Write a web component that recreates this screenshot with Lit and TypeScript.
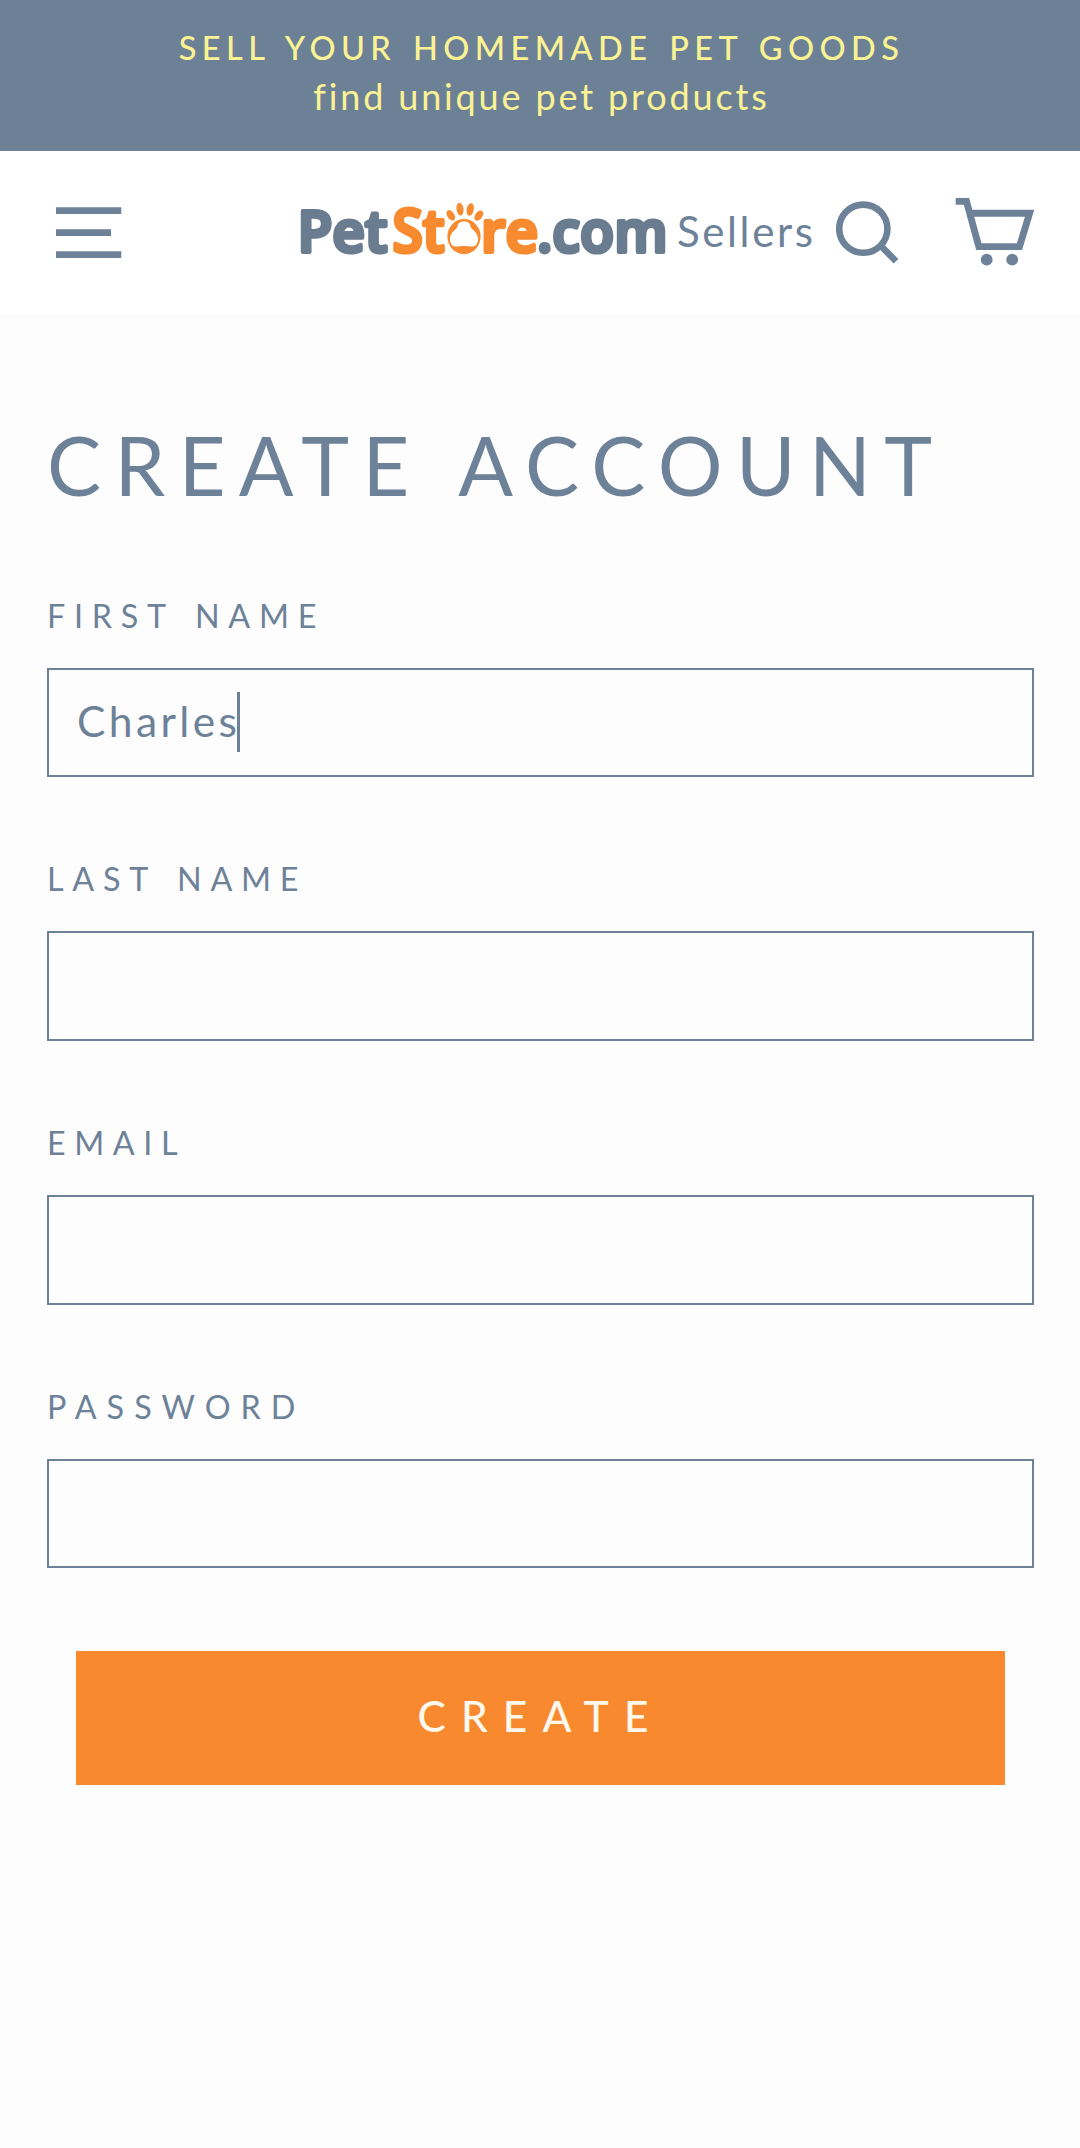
import { LitElement, html, css, svg } from "lit";
import { customElement, state } from "lit/decorators.js";

interface Field {
  label: string;
  value: string;
  focused: boolean;
  tracking: number;
}

const toes = [
  { x: 150.8, y: 17.3, tilt: -32, ry: 5.8 },
  { x: 160, y: 11.2, tilt: -8, ry: 6.4 },
  { x: 170.2, y: 11.5, tilt: 12, ry: 6.4 },
  { x: 178.8, y: 17.6, tilt: 36, ry: 5.8 },
];

@customElement("store-logo")
export class StoreLogo extends LitElement {
  static styles = css`
    :host { display: block; width: 366px; height: 69px; }
    svg { display: block; overflow: visible; }
    text {
      font: 600 58px "Open Sans", "Noto Sans", sans-serif;
      stroke-width: 4.2;
      stroke-linejoin: round;
      paint-order: stroke;
    }
    .big { font-size: 60px; }
    .slate { fill: #6a7c90; stroke: #6a7c90; }
    .orange { fill: #f88a2f; stroke: #f88a2f; }
    .paw { fill: #f88a2f; }
    .pad { fill: #fff; }
  `;
  render() {
    return html`<svg width="366" height="69" viewBox="0 0 366 69" role="img" aria-label="PetStore.com">
      <text class="slate" x="-2.500" y="53.800" textLength="90" lengthAdjust="spacingAndGlyphs">Pet</text>
      <text class="orange big" x="92.5" y="53.800" textLength="52" lengthAdjust="spacingAndGlyphs">St</text>
      <ellipse class="paw" cx="164" cy="38.6" rx="16.6" ry="17.6" />
      <path class="pad" d="M164 23.500c4.600 0 6 2.200 6.600 5.200.7 3 7.400 5 7.400 12.300 0 5-2.700 7.600-6 7.600-2.400 0-4.600-.7-8-.7s-5.600.7-8 .7c-3.300 0-6-2.600-6-7.600 0-7.300 6.700-9.300 7.400-12.300.6-3 2-5.200 6.600-5.200z" />
      ${toes.map((t) => svg`<ellipse class="paw" cx=${t.x} cy=${t.y} rx="3.5" ry=${t.ry} transform="rotate(${t.tilt} ${t.x} ${t.y})" />`)}
      <text class="orange" x="181" y="53.800" textLength="57" lengthAdjust="spacingAndGlyphs">re</text>
      <text class="slate" x="237" y="53.800" textLength="130.500" lengthAdjust="spacingAndGlyphs">.com</text>
    </svg>`;
  }
}

@customElement("app-root")
export class AppRoot extends LitElement {
  static styles = css`
    :host {
      display: block;
      min-height: 2148px;
      background: #fdfdfd;
      color: #6d8298;
      font-family: Lato, "Open Sans", sans-serif;
    }
    .banner {
      height: 151px;
      box-sizing: border-box;
      padding-top: 23px;
      background: #6d8196;
      color: #fbf294;
      text-align: center;
      white-space: nowrap;
    }
    .headline { padding-left: 3px; font-size: 32.5px; font-weight: 500; line-height: 49px; letter-spacing: 5.45px; word-spacing: 3px; }
    .tagline { padding-left: 3px; font-size: 36px; line-height: 48px; letter-spacing: 2.85px; font-variant-ligatures: none; }
    .header {
      display: flex;
      align-items: center;
      height: 163px;
      padding-left: 56px;
      background: #fff;
    }
    .header svg { display: block; flex: none; }
    .header store-logo { flex: none; margin-left: 178px; }
    .sellers { width: 147px; margin-left: 11px; padding-bottom: 4px; font-size: 42px; letter-spacing: 2.62px; }
    .search { margin-left: 12px; }
    .cart { margin-left: 55px; }
    .main { padding: 102px 46px 0 47px; }
    .title { margin: 0 0 81.6px; font-size: 81px; font-weight: 400; line-height: 98px; letter-spacing: 13.4px; word-spacing: 4px; white-space: nowrap; }
    .form { display: flex; flex-direction: column; gap: 81px; }
    .field { display: flex; flex-direction: column; gap: 32px; }
    .label { font-size: 32.3px; line-height: 41px; word-spacing: 4px; }
    .form { margin-top: -1px; }
    .input {
      display: flex;
      align-items: center;
      height: 109.7px;
      box-sizing: border-box;
      border: 2px solid #6d8298;
      padding-left: 28px;
      font-size: 42.5px;
      letter-spacing: 3.4px;
    }
    .value { padding-bottom: 4px; }
    .caret { width: 3px; height: 60px; margin-left: -3px; background: #6d8298; }
    .create {
      display: flex;
      align-items: center;
      justify-content: center;
      height: 134px;
      margin: 82.6px 29px 0;
      padding-bottom: 4px;
      box-sizing: border-box;
      background: #f8892f;
      color: #fff8ec;
      font-size: 42.5px;
      font-weight: 500;
      letter-spacing: 15.12px;
    }
  `;

  @state() fields: Field[] = [
    { label: "FIRST NAME", value: "Charles", focused: true, tracking: 8.75 },
    { label: "LAST NAME", value: "", focused: false, tracking: 8.75 },
    { label: "EMAIL", value: "", focused: false, tracking: 8.6 },
    { label: "PASSWORD", value: "", focused: false, tracking: 9.99 },
  ];

  render() {
    return html`
      <div class="banner">
        <div class="headline">SELL YOUR HOMEMADE PET GOODS</div>
        <div class="tagline">find unique pet products</div>
      </div>
      <div class="header">
        <svg width="66" height="52" viewBox="0 0 66 52" fill="none" stroke="#6d8298" stroke-width="6.7">
          <path d="M0 3.700h65.300M0 25.700h55M0 47.700h65.300" />
        </svg>
        <store-logo></store-logo>
        <div class="sellers">Sellers</div>
        <svg class="search" width="64" height="64" viewBox="0 0 64 64" fill="none" stroke="#6d8298" stroke-width="6.6">
          <circle cx="27.300" cy="27.700" r="24.100" />
          <path d="M44 44L60 60.300" />
        </svg>
        <svg class="cart" width="80" height="69" viewBox="0 0 80 69">
          <path fill="none" stroke="#6d8298" stroke-width="6.9" d="M.7 3.400H11.500L23.800 48.600H64.500L74.600 15.300H15" />
          <circle cx="31.700" cy="61.700" r="5.900" fill="#6d8298" />
          <circle cx="57.200" cy="61.700" r="5.900" fill="#6d8298" />
        </svg>
      </div>
      <div class="main">
        <h1 class="title">CREATE ACCOUNT</h1>
        <div class="form">
          ${this.fields.map(
            (f) => html`<div class="field">
              <div class="label" style="letter-spacing:${f.tracking}px">${f.label}</div>
              <div class="input" role="textbox">
                ${f.value ? html`<span class="value">${f.value}</span>` : null}${f.focused ? html`<span class="caret"></span>` : null}
              </div>
            </div>`
          )}
        </div>
        <div class="create" role="button">CREATE</div>
      </div>
    `;
  }
}
